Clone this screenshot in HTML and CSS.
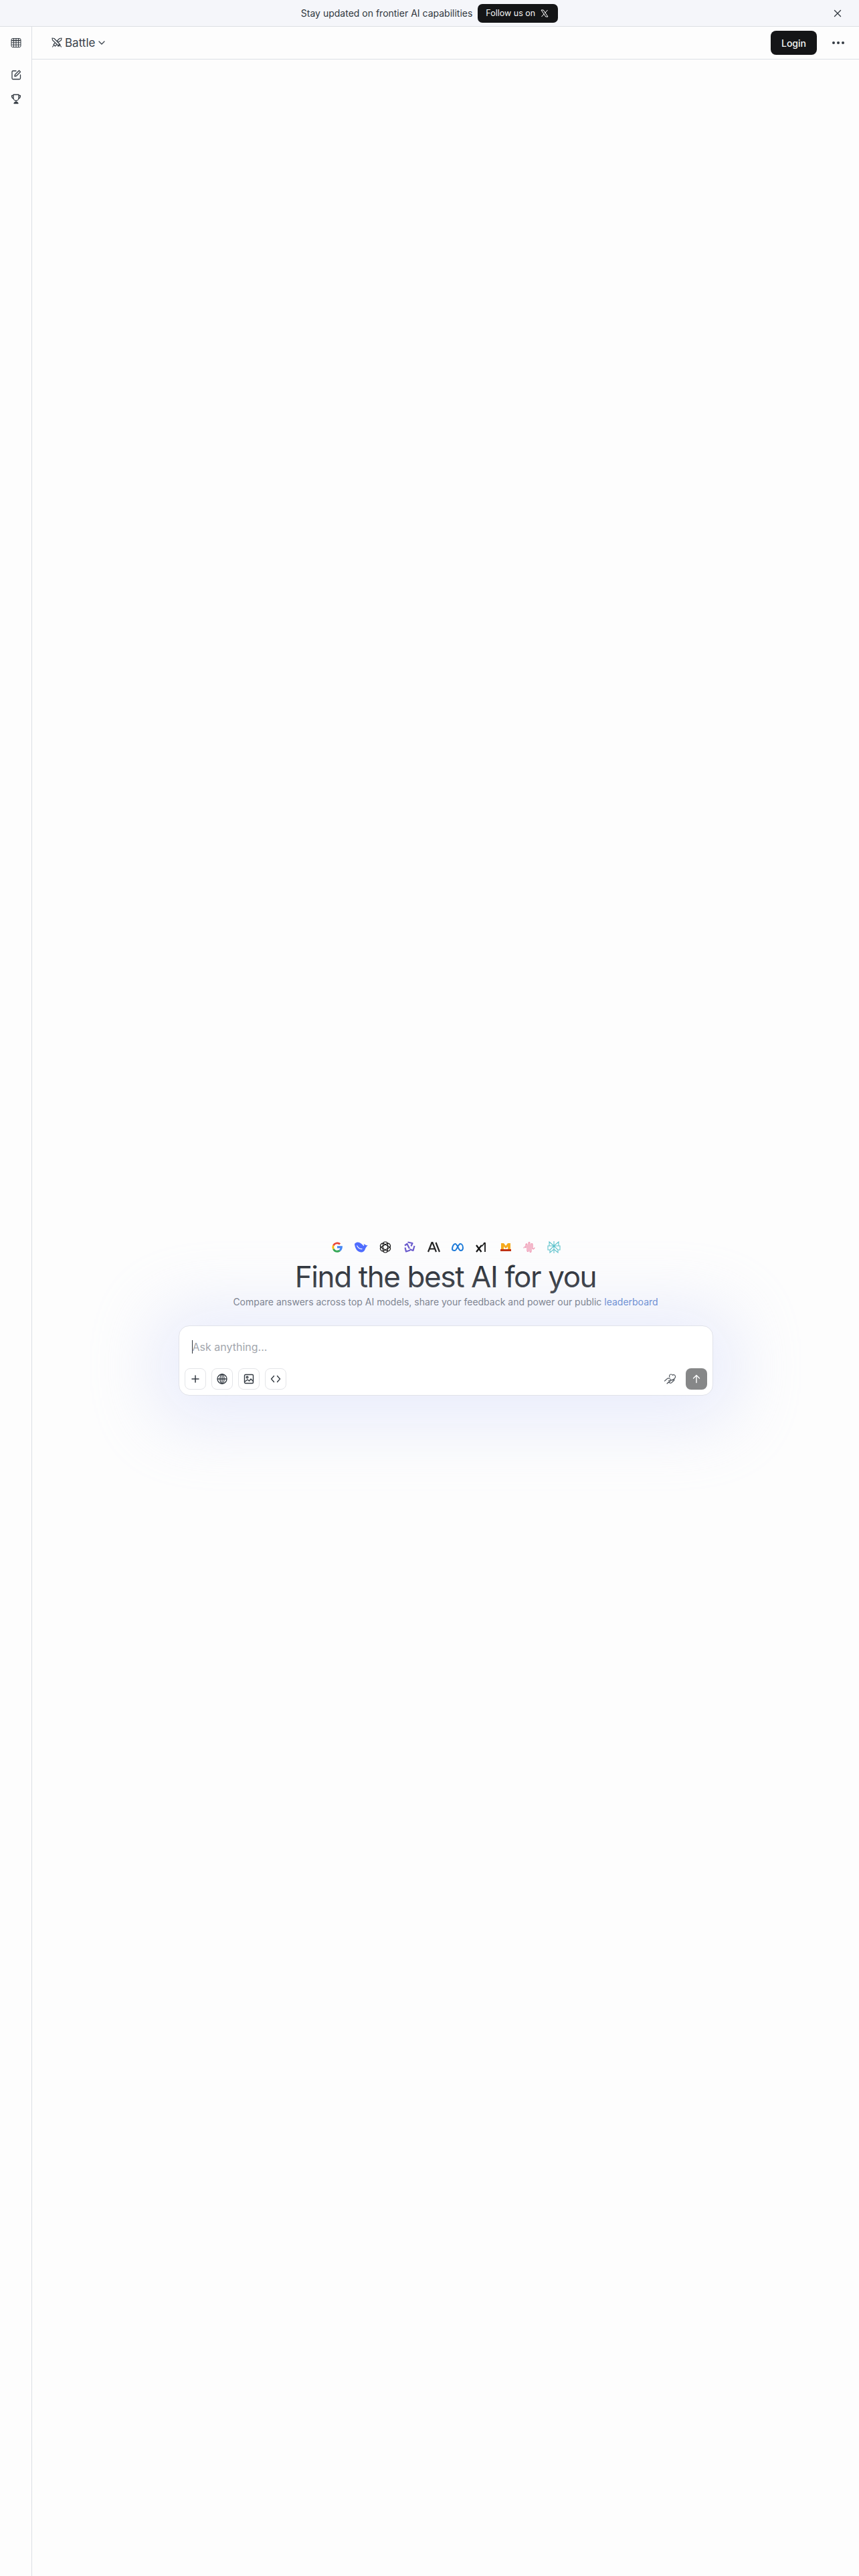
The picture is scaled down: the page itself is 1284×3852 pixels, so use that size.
FILE: index.html
```html
<!DOCTYPE html>
<html lang="en">
<head>
    <meta charset="UTF-8">
    <title>Battle</title>
    <link rel="stylesheet" href="styles.css">
</head>
<body>
<div class="banner">
    <div class="bannerMiddle">
        <span class="bannerText">Stay updated on frontier AI capabilities</span>
        <button class="followBtn">Follow us on
            <svg width="12" height="12" viewBox="0 0 24 24" fill="none" stroke="#fff" stroke-width="2"><path d="M2 2h6.500L22 22h-6.500z"/><path d="M21 2l-8 9M10.500 13.500L3 22"/></svg>
        </button>
    </div>
    <button class="closeBtn">
        <svg width="16" height="16" viewBox="0 0 16 16" fill="none" stroke="#333a42" stroke-width="1.400" stroke-linecap="round"><path d="M3.500 3.500l9 9M12.500 3.500l-9 9"/></svg>
    </button>
</div>

<div class="page">
    <div class="sidebar">
        <div class="sideTop">
            <svg width="16" height="16" viewBox="0 0 16 16" fill="none" stroke="#333a42" stroke-width="1"><path d="M3 1.500h10A2 2 0 0 1 15 3.500v9a2 2 0 0 1-2 2H3a2 2 0 0 1-2-2v-9a2 2 0 0 1 2-2z"/><path d="M1 4.500h14" stroke-width="1.600"/><path d="M1 7.800h14M1 11.100h14M4.500 1.500v13M8 1.500v13M11.500 1.500v13"/></svg>
        </div>
        <div class="sideLinks">
            <svg width="16" height="16" viewBox="0 0 16 16" fill="none" stroke="#333a42" stroke-width="1.300" stroke-linecap="round" stroke-linejoin="round"><path d="M8 2H3.500A1.500 1.500 0 0 0 2 3.500V13a1.500 1.500 0 0 0 1.500 1.500H13a1.500 1.500 0 0 0 1.500-1.500V8"/><path d="M12.500 1.500l2 2L8.500 9.500l-2.500.5.500-2.500z"/></svg>
            <svg width="16" height="16" viewBox="0 0 16 16" fill="none" stroke="#333a42" stroke-width="1.300" stroke-linejoin="round"><path d="M4 1.500h8v5a4 4 0 0 1-8 0z"/><path d="M4 3H1.500c0 2.500 1 4 3 4.500M12 3h2.500c0 2.500-1 4-3 4.500"/><path d="M8 10.500v2.500M5 14.500h6l-1-1.500H6z"/></svg>
        </div>
    </div>

    <div class="content">
        <div class="topbar">
            <div class="modeSwitch">
                <svg width="16" height="16" viewBox="0 0 16 16" fill="none" stroke="#3a424b" stroke-width="1.200" stroke-linecap="round" stroke-linejoin="round"><path d="M1 1l3 .5L13 11l-2 2L1.500 4z"/><path d="M15 1l-3 .5-3.500 3.500 2 2L14.500 4z"/><path d="M5 8.500l-2 2 2.500 2.500 2-2M12 10l-2.500 3M3.500 11.500L1.500 14M12.500 11.500l2 2.500"/></svg>
                <span class="modeName">Battle</span>
                <svg width="12" height="12" viewBox="0 0 12 12" fill="none" stroke="#3a424b" stroke-width="1.300" stroke-linecap="round" stroke-linejoin="round"><path d="M2 4l4 4 4-4"/></svg>
            </div>
            <div class="topRight">
                <button class="loginBtn">Login</button>
                <svg class="dots" width="20" height="6" viewBox="0 0 20 6" fill="#333a42"><circle cx="3" cy="3" r="2"/><circle cx="10" cy="3" r="2"/><circle cx="17" cy="3" r="2"/></svg>
            </div>
        </div>

        <div class="main">
            <div class="logos">
                <!-- google -->
                <svg width="20" height="20" viewBox="0 0 20 20"><path d="M17.900 8.300H10v3.200h4.500c-.3 1.100-1 2-1.900 2.600l2.300 1.900c1.900-1.700 3.200-4.400 3-7.700z" fill="#4285f4"/><path d="M10 14.800a4.800 4.800 0 0 1-4.500-3.100L3.200 13.400A8 8 0 0 0 10 17.800c2 0 3.700-.6 4.900-1.800l-2.300-1.900c-.7.500-1.600.7-2.600.7z" fill="#34a853"/><path d="M5.500 11.700a5 5 0 0 1 0-3.400L3.200 6.600a8 8 0 0 0 0 6.800z" fill="#fbbc05"/><path d="M10 5.200c1.200 0 2.300.4 3.100 1.200l2.100-2.100A8 8 0 0 0 3.200 6.600l2.300 1.700A4.800 4.800 0 0 1 10 5.200z" fill="#ea4335"/></svg>
                <!-- whale -->
                <svg width="20" height="20" viewBox="0 0 20 20"><path d="M0 5C.3 10 3 17 9.500 17.500c4 .3 5.500-2.500 6.500-5 .8-2 2-3.700 4-5.500-1.700.5-3 .3-3.800-.5-.6-.6-1.500-1.200-2.700-.8 1 .8 1 1.900.3 2.600C12 6 8 2.500 4.500 2.500 3 2.500 1.200 3.500 0 5z" fill="#4d6bfe"/><path d="M3.500 7.500c1.700 3.500 5 5.500 8 5" fill="none" stroke="#fff" stroke-width="1.100"/></svg>
                <!-- openai -->
                <svg width="20" height="20" viewBox="0 0 20 20" fill="none" stroke="#111" stroke-width="1.200"><rect x="6.500" y="2" width="7" height="16" rx="3.500"/><rect x="6.500" y="2" width="7" height="16" rx="3.500" transform="rotate(60 10 10)"/><rect x="6.500" y="2" width="7" height="16" rx="3.500" transform="rotate(120 10 10)"/></svg>
                <!-- purple star -->
                <svg width="20" height="20" viewBox="0 0 20 20" fill="none" stroke="#6a5acd" stroke-width="2.200" stroke-linejoin="round"><path d="M7.500 2.500l7 1.500-2 4.500M3 7.500l3.500-2.500 3.500 7M17.500 8l-2 7-5-2M3.500 10.500l1.500 6 6-2"/></svg>
                <!-- anthropic -->
                <svg width="20" height="20" viewBox="0 0 20 20" fill="none" stroke="#222" stroke-width="2.200"><path d="M2 17L7.500 3h1L14 17M4 12.500h8M13.500 3L19 17"/></svg>
                <!-- meta -->
                <svg width="20" height="20" viewBox="0 0 20 20" fill="none" stroke="#1877d8" stroke-width="2"><path d="M2 13c0-4 2-8 4.500-8 3 0 5 10 8 10 2 0 3.500-1.500 3.500-4 0-3.500-1.700-6-4-6-3 0-5.500 10-8 10C3.500 15 2 14.500 2 13z"/></svg>
                <!-- xai -->
                <svg width="20" height="20" viewBox="0 0 20 20" fill="none" stroke="#111" stroke-width="2.200"><path d="M2 7l7.500 10M10 7L2 17"/><path d="M15 3v14" stroke-width="1.800"/><path d="M14.500 3l-4 5.500" stroke-width="1.500"/></svg>
                <!-- orange m -->
                <svg width="20" height="20" viewBox="0 0 20 20"><path d="M3 4h4l3 4 3-4h4v9h-4V9l-3 3-3-3v4H3z" fill="#f6a91b"/><rect x="2" y="13" width="16" height="3" fill="#c0300f"/></svg>
                <!-- pink wave -->
                <svg width="20" height="20" viewBox="0 0 20 20" fill="none" stroke="#ee8aa8" stroke-width="1.200" stroke-linecap="round"><path d="M1 11c1-2 2-2 3 0V7c0-3 2-3 2 0v8c0 2 2 2 2 0V4c0-2 2-2 2 0v12c0 2 2 2 2 0V6c0-2 2-2 2 0v6c1 1 2 1 3-1"/></svg>
                <!-- perplexity -->
                <svg width="20" height="20" viewBox="0 0 20 20" fill="none" stroke="#5dc3cc" stroke-width="1.100"><path d="M3 2l7 6 7-6v6H3zM10 1v18M10 8l-6 6v4l6-5 6 5v-4zM3 8H1v6h3M17 8h2v6h-3"/></svg>
            </div>

            <h1>Find the best AI for you</h1>
            <p class="subtitle">Compare answers across top AI models, share your feedback and power our public <a href="#">leaderboard</a></p>

            <div class="askBox">
                <div class="askInput"><span class="caret"></span>Ask anything...</div>
                <div class="askTools">
                    <div class="toolGroup">
                        <button class="toolBtn">
                            <svg width="16" height="16" viewBox="0 0 16 16" fill="none" stroke="#333a42" stroke-width="1.500" stroke-linecap="round"><path d="M8 3v10M3 8h10"/></svg>
                        </button>
                        <button class="toolBtn">
                            <svg width="16" height="16" viewBox="0 0 16 16" fill="none" stroke="#333a42" stroke-width="1.300"><circle cx="8" cy="8" r="7"/><ellipse cx="8" cy="8" rx="3" ry="7"/><path d="M1 8h14M8 1v14"/></svg>
                        </button>
                        <button class="toolBtn">
                            <svg width="16" height="16" viewBox="0 0 16 16" fill="none" stroke="#333a42" stroke-width="1.400" stroke-linejoin="round"><rect x="1.500" y="1.500" width="13" height="13" rx="1.500"/><circle cx="5.500" cy="5.500" r="1.300"/><path d="M2 12l4-3 2.500 2 2.500-3 3.500 3.500"/></svg>
                        </button>
                        <button class="toolBtn">
                            <svg width="16" height="16" viewBox="0 0 16 16" fill="none" stroke="#333a42" stroke-width="1.400" stroke-linecap="round" stroke-linejoin="round"><path d="M5.500 3.500L1.500 8l4 4.500M10.500 3.500l4 4.500-4 4.500"/></svg>
                        </button>
                    </div>
                    <div class="toolGroup sendGroup">
                        <svg width="20" height="20" viewBox="0 0 20 20" fill="none" stroke="#555b62" stroke-width="1.200" stroke-linejoin="round" stroke-linecap="round"><path d="M9 7.500C7.800 5.500 9 3 11 3c1.200 0 2 .6 2.400 1.500C14 3.800 15.500 3.500 16.600 4.400c1.400 1.200 1.200 3.300-.2 4.800L13.500 12"/><path d="M1.500 13l4-3.500c1-.8 2-.8 3 0l2 1.200c1 .6.700 2-.5 2H7.500"/><path d="M10.500 12.500l4-2c1.200-.5 2 .8 1 1.800l-4 3.400c-.8.600-1.500.6-2.200.2L7 14.800 5 17z"/></svg>
                        <button class="sendBtn">
                            <svg width="16" height="16" viewBox="0 0 16 16" fill="none" stroke="#fff" stroke-width="1.400" stroke-linecap="round" stroke-linejoin="round"><path d="M8 13.500v-11M3.500 7L8 2.500 12.500 7"/></svg>
                        </button>
                    </div>
                </div>
            </div>
        </div>
    </div>
</div>
</body>
</html>
```

FILE: styles.css
```css
* {
    box-sizing: border-box;
}

body {
    margin: 0;
    min-height: 100vh;
    display: flex;
    flex-direction: column;
    background-color: #fdfdfd;
    color: #30363d;
    font-family: Inter, "Liberation Sans", sans-serif;
}

button {
    font-family: inherit;
    border: none;
    cursor: pointer;
}

svg {
    display: block;
}

.banner {
    height: 40px;
    flex-shrink: 0;
    display: flex;
    align-items: center;
    justify-content: center;
    position: relative;
    background-color: #f5f6fa;
    border-bottom: 1px solid #dcdfe4;
}

.bannerMiddle {
    display: flex;
    align-items: center;
    gap: 8px;
}

.bannerText {
    font-size: 14px;
    color: #30363d;
}

.followBtn {
    height: 28px;
    padding: 0 14px 0 12px;
    display: flex;
    align-items: center;
    gap: 8px;
    border-radius: 7px;
    background-color: #141517;
    color: #f5f5f5;
    font-size: 12.5px;
}

.closeBtn {
    position: absolute;
    right: 24px;
    top: 12px;
    padding: 0;
    background: none;
}

.page {
    flex: 1;
    display: flex;
}

.sidebar {
    width: 48px;
    flex-shrink: 0;
    border-right: 1px solid #dcdfe4;
    display: flex;
    flex-direction: column;
    align-items: center;
}

.sideTop {
    height: 48px;
    display: flex;
    align-items: center;
}

.sideLinks {
    padding-top: 16px;
    display: flex;
    flex-direction: column;
    gap: 20px;
}

.content {
    flex: 1;
    display: flex;
    flex-direction: column;
}

.topbar {
    height: 49px;
    flex-shrink: 0;
    display: flex;
    align-items: center;
    justify-content: space-between;
    padding: 0 21px 0 29px;
    border-bottom: 1px solid #dcdfe4;
}

.modeSwitch {
    display: flex;
    align-items: center;
    gap: 4px;
    color: #3a424b;
}

.modeName {
    font-size: 17px;
}

.topRight {
    display: flex;
    align-items: center;
    gap: 22px;
}

.loginBtn {
    width: 69px;
    height: 36px;
    border-radius: 8px;
    background-color: #141517;
    color: #f5f5f5;
    font-size: 14px;
    font-weight: 500;
}

.main {
    flex: 1;
    display: flex;
    flex-direction: column;
    align-items: center;
    justify-content: center;
}

.logos {
    display: flex;
    gap: 16px;
}

h1 {
    margin: 10px 0 0 0;
    font-size: 44px;
    line-height: 48px;
    font-weight: 400;
    letter-spacing: -1.4px;
    color: #24292f;
}

.subtitle {
    margin: 4px 0 0 0;
    font-size: 14px;
    line-height: 20px;
    color: #565c66;
}

.subtitle a {
    color: #3f6fc4;
    text-decoration: none;
}

.askBox {
    width: 799px;
    height: 105px;
    margin-top: 25px;
    padding: 0 8px 8px 8px;
    display: flex;
    flex-direction: column;
    justify-content: space-between;
    background-color: #fff;
    border: 1px solid #e1e3ea;
    border-radius: 16px;
    box-shadow: 0 8px 100px 35px rgba(222, 228, 250, 0.65);
}

.askInput {
    margin-top: 21px;
    padding-left: 11px;
    font-size: 16px;
    line-height: 20px;
    color: #a2a6ad;
    display: flex;
}

.caret {
    width: 1px;
    height: 20px;
    background-color: #30363d;
}

.askTools {
    display: flex;
    justify-content: space-between;
    align-items: center;
}

.toolGroup {
    display: flex;
    align-items: center;
    gap: 8px;
}

.sendGroup {
    gap: 13px;
}

.toolBtn {
    width: 32px;
    height: 32px;
    display: flex;
    align-items: center;
    justify-content: center;
    padding: 0;
    background-color: #fff;
    border: 1px solid #e4e5e8;
    border-radius: 8px;
}

.sendBtn {
    width: 32px;
    height: 32px;
    display: flex;
    align-items: center;
    justify-content: center;
    padding: 0;
    background-color: #868788;
    border-radius: 8px;
}
```
